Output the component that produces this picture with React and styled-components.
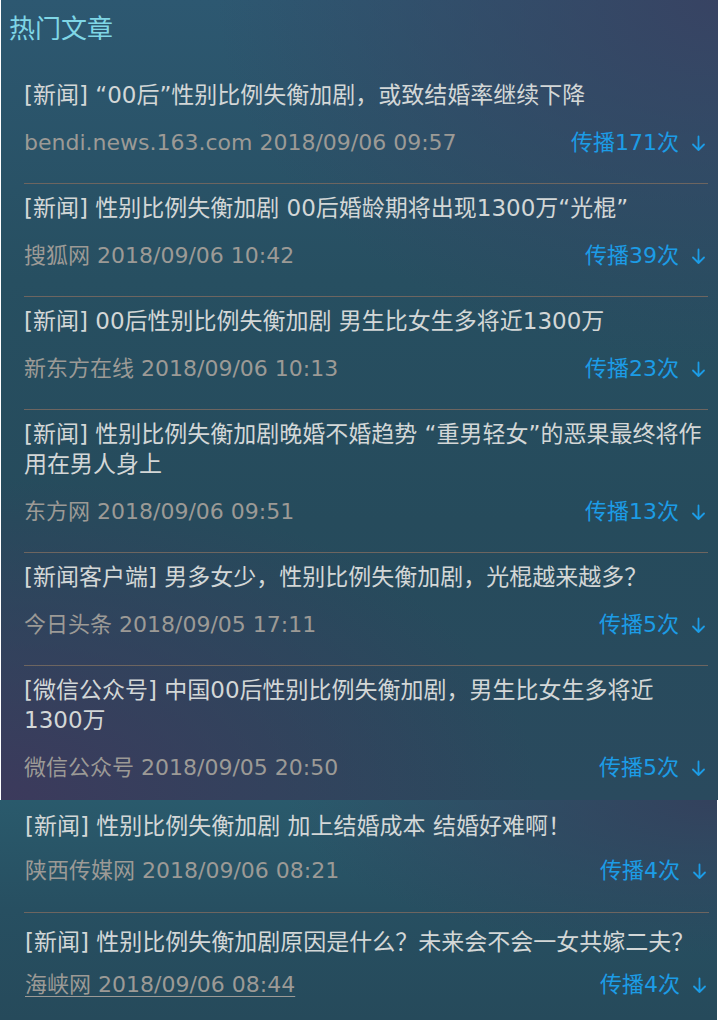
import React from "react";
import styled, { createGlobalStyle } from "styled-components";

const GlobalStyle = createGlobalStyle`
  html, body {
    margin: 0;
    padding: 0;
    background: #ffffff;
  }
  body {
    font-family: "DejaVu Sans", "Noto Sans CJK SC", sans-serif;
  }
  * { box-sizing: border-box; }
`;

const Page = styled.div`
  width: 718px;
  display: flex;
  flex-direction: column;
`;

const TopPanel = styled.section`
  margin-left: 1px;
  width: 717px;
  height: 800px;
  overflow: hidden;
  background:
    radial-gradient(ellipse 70% 45% at 100% 0%, rgba(56, 66, 98, 0.95) 0%, rgba(56, 66, 98, 0) 100%),
    radial-gradient(ellipse 75% 40% at 0% 100%, rgba(60, 58, 92, 1) 0%, rgba(60, 58, 92, 0) 100%),
    linear-gradient(180deg, #2d5871 0%, #274f61 35%, #264b5c 65%, #2a4a5e 100%);
`;

const BottomPanel = styled.section`
  width: 717px;
  height: 220px;
  overflow: hidden;
  background:
    radial-gradient(ellipse 60% 70% at 100% 0%, rgba(52, 64, 92, 0.95) 0%, rgba(52, 64, 92, 0) 100%),
    linear-gradient(180deg, #2a5a6c 0%, #274f61 50%, #264a5b 100%);
`;

const Header = styled.h2`
  margin: 0;
  padding: 9px 0 26px 8px;
  font-family: "Noto Sans CJK SC", sans-serif;
  font-size: 26px;
  font-weight: 400;
  line-height: 36px;
  color: #7fd6e6;
`;

const List = styled.ul`
  list-style: none;
  margin: 0;
  padding: 0 ${(p) => p.$right}px 0 ${(p) => p.$left}px;
`;

const Item = styled.li`
  padding: ${(p) => p.$pt}px 0 ${(p) => p.$pb}px;
  border-bottom: 1px solid #6d6560;
  &:last-child {
    border-bottom: none;
  }
`;

const Title = styled.div`
  font-size: 23px;
  line-height: 30px;
  color: #d3d7d7;
  padding-left: ${(p) => p.$indent}px;
`;

const Meta = styled.div`
  margin-top: ${(p) => p.$gap}px;
  display: flex;
  align-items: center;
  justify-content: space-between;
  font-size: 22px;
  line-height: 30px;
  padding-left: ${(p) => p.$indent}px;
`;

const Source = styled.span`
  color: #9c9a96;
  text-decoration: ${(p) => (p.$underline ? "underline" : "none")};
  text-underline-offset: 4px;
  text-decoration-thickness: 1px;
`;

const Share = styled.span`
  display: flex;
  align-items: center;
  gap: 12px;
  color: #1c9ce6;
  padding-right: 2px;
`;

const ArrowDown = () => (
  <svg width="15" height="17" viewBox="0 0 15 17" fill="none">
    <path
      d="M7.5 1.5 V15 M2 9.5 L7.5 15 L13 9.5"
      stroke="#1c9ce6"
      strokeWidth="1.8"
      strokeLinecap="round"
      strokeLinejoin="round"
    />
  </svg>
);

const topItems = [
  {
    title: "[新闻] “00后”性别比例失衡加剧，或致结婚率继续下降",
    source: "bendi.news.163.com 2018/09/06 09:57",
    count: 171,
  },
  {
    title: "[新闻] 性别比例失衡加剧 00后婚龄期将出现1300万“光棍”",
    source: "搜狐网 2018/09/06 10:42",
    count: 39,
  },
  {
    title: "[新闻] 00后性别比例失衡加剧 男生比女生多将近1300万",
    source: "新东方在线 2018/09/06 10:13",
    count: 23,
  },
  {
    title: "[新闻] 性别比例失衡加剧晚婚不婚趋势 “重男轻女”的恶果最终将作用在男人身上",
    source: "东方网 2018/09/06 09:51",
    count: 13,
  },
  {
    title: "[新闻客户端] 男多女少，性别比例失衡加剧，光棍越来越多？",
    source: "今日头条 2018/09/05 17:11",
    count: 5,
  },
  {
    title: "[微信公众号] 中国00后性别比例失衡加剧，男生比女生多将近1300万",
    source: "微信公众号 2018/09/05 20:50",
    count: 5,
  },
];

const bottomItems = [
  {
    title: "[新闻] 性别比例失衡加剧 加上结婚成本 结婚好难啊！",
    source: "陕西传媒网 2018/09/06 08:21",
    count: 4,
    pt: 11,
    gap: 15,
    pb: 26,
  },
  {
    title: "[新闻] 性别比例失衡加剧原因是什么？未来会不会一女共嫁二夫？",
    source: "海峡网 2018/09/06 08:44",
    count: 4,
    pt: 14,
    gap: 13,
    pb: 20,
    underline: true,
  },
];

const Article = ({ item, pt, gap, pb, indent }) => (
  <Item $pt={pt} $pb={pb}>
    <Title $indent={indent}>{item.title}</Title>
    <Meta $gap={gap} $indent={indent}>
      <Source $underline={item.underline}>{item.source}</Source>
      <Share>
        <span>传播{item.count}次</span>
        <ArrowDown />
      </Share>
    </Meta>
  </Item>
);

export default function App() {
  return (
    <>
      <GlobalStyle />
      <Page>
        <TopPanel>
          <Header>热门文章</Header>
          <List $left={23} $right={10}>
            {topItems.map((it, i) => (
              <Article key={i} item={it} pt={9} gap={18} pb={25} indent={0} />
            ))}
          </List>
        </TopPanel>
        <BottomPanel>
          <List $left={24} $right={8}>
            {bottomItems.map((it, i) => (
              <Article key={i} item={it} pt={it.pt} gap={it.gap} pb={it.pb} indent={1} />
            ))}
          </List>
        </BottomPanel>
      </Page>
    </>
  );
}
